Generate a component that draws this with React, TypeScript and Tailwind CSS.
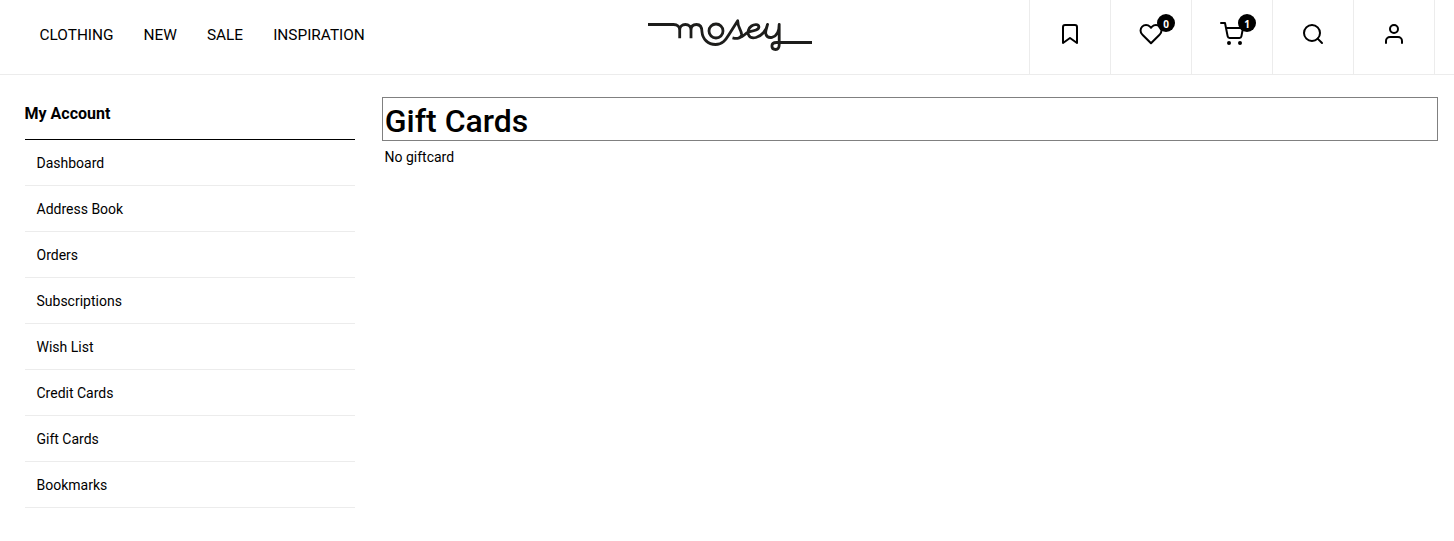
import React from "react";

const links = ["Dashboard", "Address Book", "Orders", "Subscriptions", "Wish List", "Credit Cards", "Gift Cards", "Bookmarks"];

function Icon({ children }: { children: React.ReactNode }) {
  return (
    <svg className="size-6" viewBox="0 0 24 24" fill="none" stroke="currentColor" strokeWidth="2" strokeLinejoin="round" strokeLinecap="round">
      {children}
    </svg>
  );
}

function Cell({ children, badge }: { children: React.ReactNode; badge?: string }) {
  return (
    <button className="flex h-[74px] w-[81px] justify-center border-l border-[#ececec] pt-[22px]">
      <span className="relative">
        {children}
        {badge && (
          <span className="absolute -top-2 left-[18px] flex size-[18px] items-center justify-center rounded-full bg-black pt-px font-['Open_Sans',sans-serif] text-[10px] leading-none font-bold text-white">
            {badge}
          </span>
        )}
      </span>
    </button>
  );
}

function Logo() {
  return (
    <svg className="mt-[18px] h-[34px] w-[164px]" viewBox="648 18 164 34" fill="none" stroke="#1d1d1b" strokeWidth="2.800" strokeLinejoin="round">
      <path d="M648 24.500H673.500C677.500 24.500 679.700 27 679.700 30V38.200M679.700 30C679.700 26.700 682 24.500 685.400 24.500S691 26.700 691 30V38.200M691 30C691 26.700 693 24.500 696.500 24.500C701.500 24.500 702 28.500 702 32C702.500 39 708 44.500 715.500 44.500C722.500 44.500 725.800 39.800 729 34.500L737.700 20.700C737.500 28 742.200 30.500 741.500 35C740.800 38.500 737 39 732.500 37.800M740 37.500C743.500 36.500 745 33.500 748.500 32C753 31 759.200 30 758.900 26.800C758.600 24.200 754.500 24 751.500 26C748.500 28 747.300 32 748.500 34.800C749.600 37.500 752.500 38.300 756 37.500C762 36 766.500 30 767.600 24.300C766.500 29 764.800 31.500 766 34.500C767 37.200 769.500 37.800 772 37.300C777 36.200 779.200 31 779.200 24.300V44.800C779.200 47.700 778 49.500 775.600 49.500S771.900 47.900 771.900 46C771.900 43.900 773.600 42.500 776.500 42.500H812" />
      <circle cx="716" cy="31" r="7" />
    </svg>
  );
}

export default function App() {
  return (
    <div className="min-h-[541px] bg-white font-['Roboto',sans-serif] text-black">
      <header className="grid h-[75px] grid-cols-[648px_164px_1fr] border-b border-[#ececec]">
        <nav className="flex gap-[30px] pt-[24px] pl-[39.5px] text-[15.400px] leading-[22px]">
          <a>CLOTHING</a>
          <a>NEW</a>
          <a>SALE</a>
          <a>INSPIRATION</a>
        </nav>
        <Logo />
        <div className="mr-[19px] flex justify-end">
          <div className="flex border-r border-[#ececec]">
            <Cell><Icon><path d="M19 21l-7-5-7 5V5a2 2 0 0 1 2-2h10a2 2 0 0 1 2 2z" /></Icon></Cell>
            <Cell badge="0"><Icon><path d="M20.840 4.610a5.500 5.500 0 0 0-7.780 0L12 5.670l-1.060-1.060a5.500 5.500 0 0 0-7.780 7.780l1.060 1.060L12 21.230l7.780-7.780 1.060-1.060a5.500 5.500 0 0 0 0-7.780z" /></Icon></Cell>
            <Cell badge="1"><Icon><circle cx="9" cy="21" r="1" /><circle cx="20" cy="21" r="1" /><path d="M1 1h4l2.680 13.390a2 2 0 0 0 2 1.610h9.720a2 2 0 0 0 2-1.610L23 6H6" /></Icon></Cell>
            <Cell><Icon><circle cx="11" cy="11" r="8" /><path d="M21 21l-4.350-4.350" /></Icon></Cell>
            <Cell><Icon><path d="M20 21v-2a4 4 0 0 0-4-4H8a4 4 0 0 0-4 4v2" /><circle cx="12" cy="7" r="4" /></Icon></Cell>
          </div>
        </div>
      </header>
      <div className="flex">
        <aside className="ml-[25px] w-[330px]">
          <h2 className="h-[65px] border-b border-black pt-[27px] text-base leading-6 font-bold"><span className="-ml-[0.5px]">My Account</span></h2>
          <ul>
            {links.map((l) => (
              <li key={l} className="flex h-[46px] items-center border-b border-[#ececec] pl-[11.5px] text-sm">{l}</li>
            ))}
          </ul>
        </aside>
        <main className="mt-[22px] mr-4 ml-[27px] flex-1">
          <h1 className="h-11 border border-[#808080] pt-[3px] pl-[1.8px] text-[32px] leading-10 font-medium">Gift Cards</h1>
          <p className="pt-[6px] pl-[2.5px] text-sm">No giftcard</p>
        </main>
      </div>
    </div>
  );
}
